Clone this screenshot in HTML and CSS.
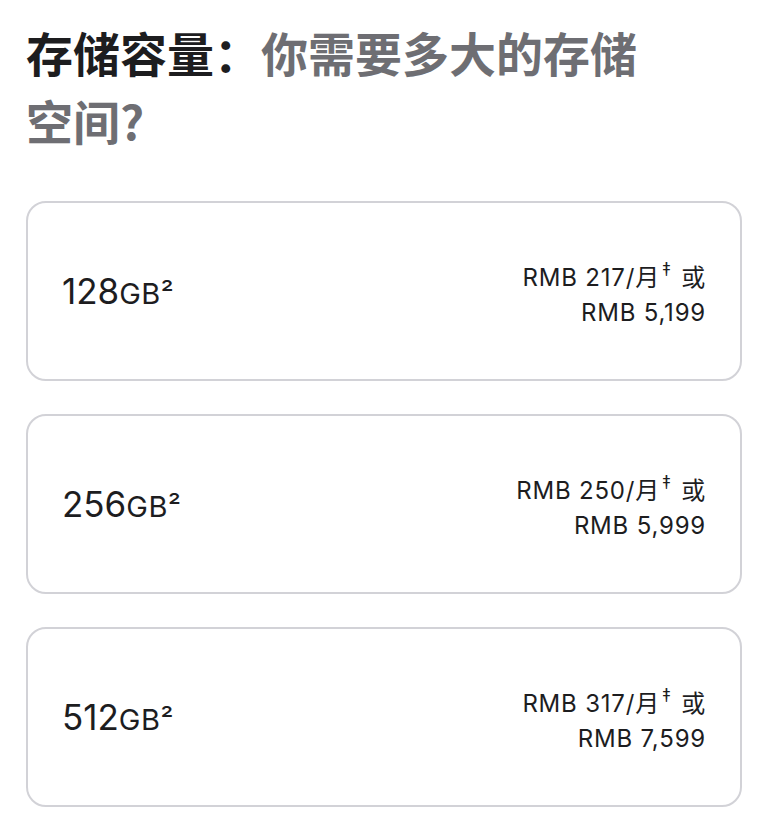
FILE: index.html
```html
<!DOCTYPE html>
<html lang="zh-CN">
<head>
  <meta charset="utf-8">
  <title>存储容量</title>
  <link rel="stylesheet" href="styles.css">
</head>
<body>
  <section class="storage">
    <h2 class="storage-title">存储容量：<span class="storage-title-sub">你需要多大的存储空间?</span></h2>
    <ul class="options">
      <li class="option">
        <div class="option-size">128<span class="option-unit">GB²</span></div>
        <div class="option-price">
          <span>RMB 217/月<sup>‡</sup> 或</span>
          <span>RMB 5,199</span>
        </div>
      </li>
      <li class="option">
        <div class="option-size">256<span class="option-unit">GB²</span></div>
        <div class="option-price">
          <span>RMB 250/月<sup>‡</sup> 或</span>
          <span>RMB 5,999</span>
        </div>
      </li>
      <li class="option">
        <div class="option-size">512<span class="option-unit">GB²</span></div>
        <div class="option-price">
          <span>RMB 317/月<sup>‡</sup> 或</span>
          <span>RMB 7,599</span>
        </div>
      </li>
    </ul>
  </section>
</body>
</html>
```

FILE: styles.css
```css
*, *::before, *::after {
  margin: 0;
  padding: 0;
  box-sizing: border-box;
}

body {
  background-color: #FFFFFF;
  color: #1D1D1F;
  font-family: "Inter", "Noto Sans CJK SC", sans-serif;
}

.storage {
  padding: 18px 36px 0 26px;
}

.storage-title {
  max-width: 630px;
  font-family: "Noto Sans CJK SC", sans-serif;
  font-size: 47px;
  font-weight: 700;
  line-height: 68px;
}

.storage-title-sub {
  color: #6E6E73;
}

.options {
  margin-top: 47px;
  list-style: none;
  display: flex;
  flex-direction: column;
  gap: 33px;
}

.option {
  display: flex;
  justify-content: space-between;
  align-items: center;
  height: 180px;
  padding: 0 34px 0 34px;
  border: 2px solid #D2D2D7;
  border-radius: 20px;
}

.option-size {
  font-size: 35px;
  font-weight: 400;
}

.option-unit {
  font-size: 29px;
  letter-spacing: 0.5px;
}

.option-price {
  display: flex;
  flex-direction: column;
  align-items: flex-end;
  padding-top: 8px;
  font-size: 24px;
  letter-spacing: 0.8px;
  line-height: 35px;
}

.option-price sup {
  font-size: 18px;
  line-height: 0;
  vertical-align: 10px;
  margin: 0 2px;
}
```
